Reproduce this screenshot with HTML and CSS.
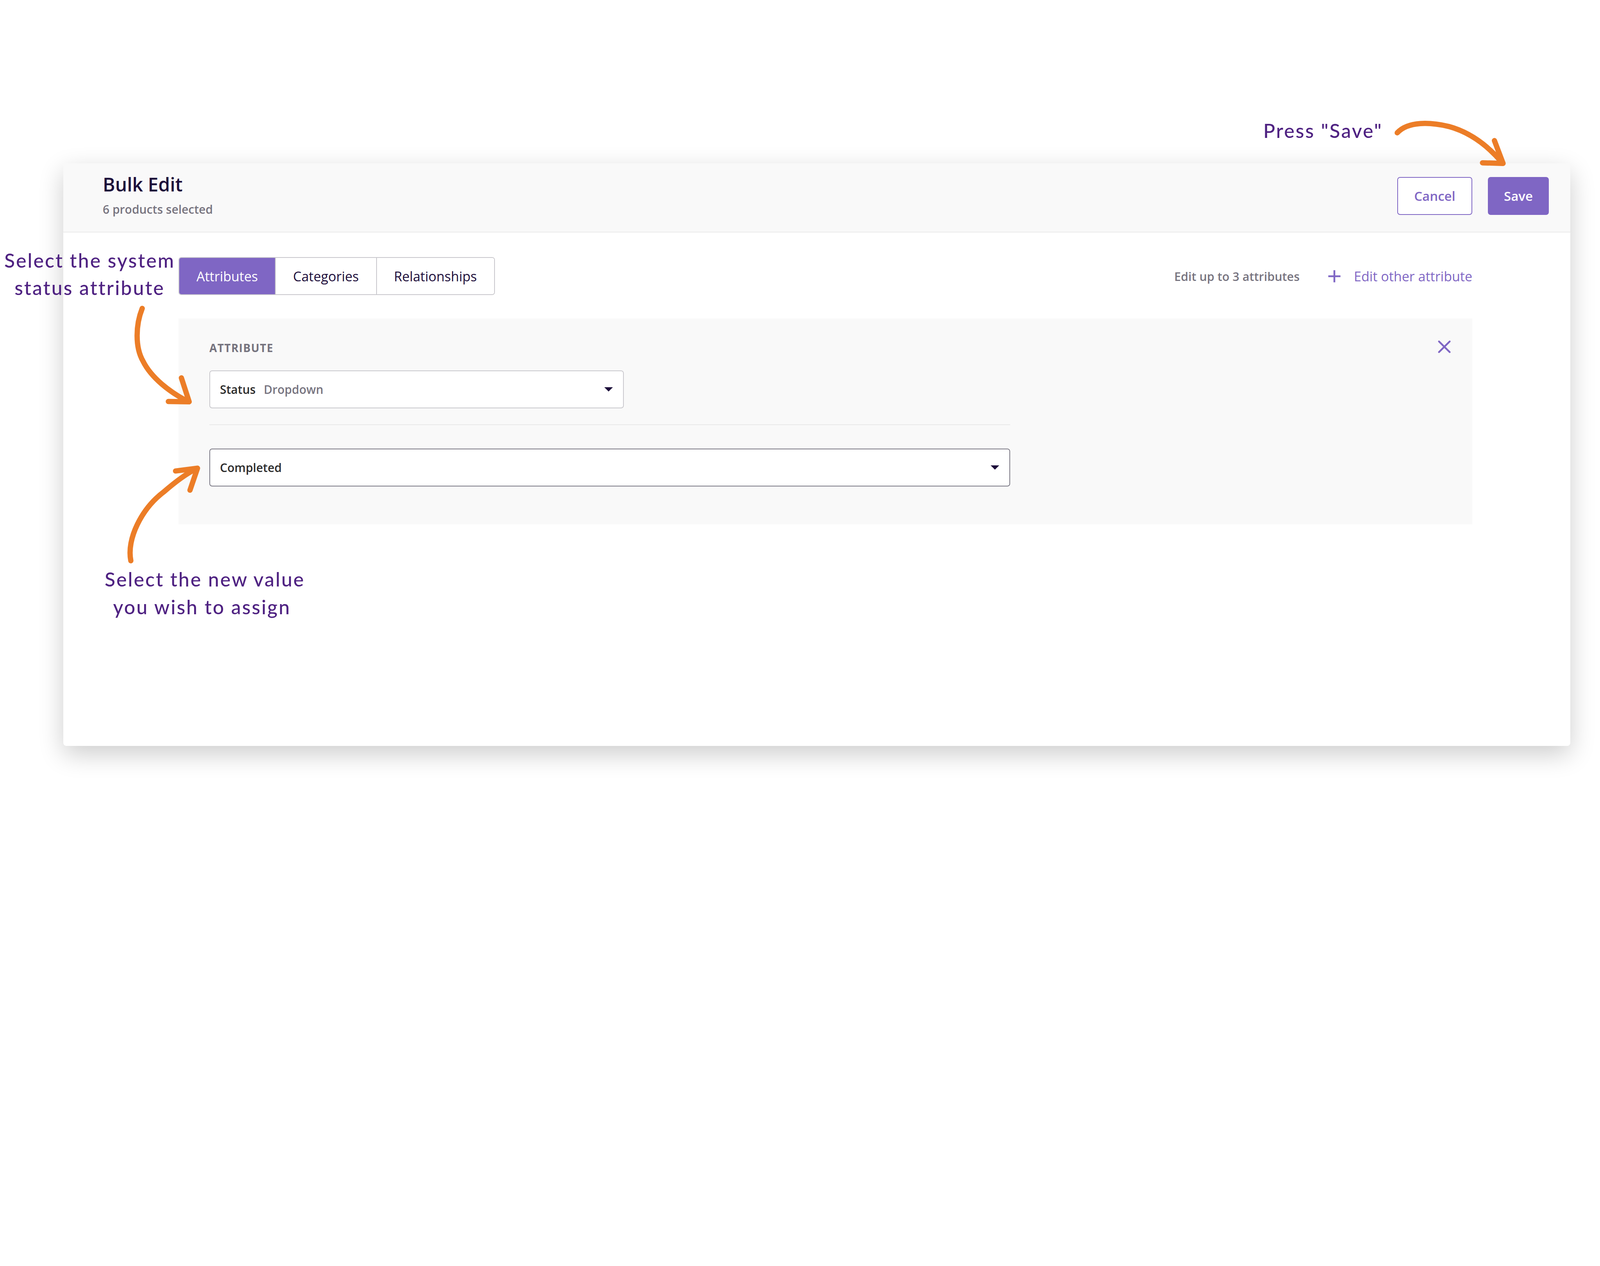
FILE: index.html
```html
<!DOCTYPE html>
<html>
<head>
    <title>Bulk Edit</title>
    <link rel="stylesheet" href="styles.css">
</head>
<body>
    <div class="stage">
        <div class="card">
            <header class="card-head">
                <div class="head-text">
                    <h1 class="title">Bulk Edit</h1>
                    <div class="subtitle">6 products selected</div>
                </div>
                <div class="head-actions">
                    <button type="button" class="btn btn-outline">Cancel</button>
                    <button type="button" class="btn btn-primary">Save</button>
                </div>
            </header>
            <div class="card-body">
                <div class="toolbar">
                    <div class="tabs">
                        <button type="button" class="tab active">Attributes</button>
                        <button type="button" class="tab">Categories</button>
                        <button type="button" class="tab">Relationships</button>
                    </div>
                    <div class="toolbar-right">
                        <span class="hint">Edit up to 3 attributes</span>
                        <a class="add-link">
                            <svg class="plus-icon" viewBox="0 0 48 48" width="34" height="34">
                                <path d="M24 2 V46 M2 24 H46" />
                            </svg>
                            Edit other attribute
                        </a>
                    </div>
                </div>
                <section class="attr-panel">
                    <div class="attr-fields">
                        <div class="field-label">ATTRIBUTE</div>
                        <div class="select select-attr">
                            <span><span class="select-name">Status</span><span class="select-type">Dropdown</span></span>
                            <span class="caret"></span>
                        </div>
                        <hr class="divider">
                        <div class="select select-value">
                            <span class="select-name">Completed</span>
                            <span class="caret"></span>
                        </div>
                    </div>
                    <button type="button" class="close-btn">
                        <svg viewBox="0 0 47 47" width="33" height="33">
                            <path d="M4 4 L43 43 M43 4 L4 43" />
                        </svg>
                    </button>
                </section>
            </div>
        </div>

        <!-- tutorial annotations -->
        <div class="note note-save">Press "Save"</div>
        <div class="note note-attr">Select the system<br>status attribute</div>
        <div class="note note-value">Select the new value<br>you wish to assign</div>

        <svg class="arrows" viewBox="0 0 5760 3240" width="4096" height="2304">
            <path d="M5030 478 C5070 435 5150 440 5215 455 C5300 478 5360 530 5405 582" />
            <path d="M5380 506 L5411 588 L5337 586" />
            <path d="M512 1110 C488 1170 486 1250 515 1300 C545 1360 610 1410 678 1446" />
            <path d="M653 1360 L681 1446 L606 1445" />
            <path d="M471 2018 C455 1940 510 1830 590 1770 C630 1735 668 1706 708 1686" />
            <path d="M632 1695 L711 1685 L684 1764" />
        </svg>
    </div>
</body>
</html>
```
FILE: styles.css
```css
body {
    margin: 0;
    font-family: "Open Sans", "Noto Sans", sans-serif;
    background-color: #fff;
}
.stage {
    position: relative;
    width: 4096px;
    height: 2304px;
    box-sizing: border-box;
    padding: 418px 0 0 162px;
    overflow: hidden;
    background-color: #fff;
}
.card {
    width: 3858px;
    height: 1491px;
    background-color: #fff;
    border-radius: 8px;
    box-shadow: 0 21px 64px rgba(0, 0, 0, 0.2);
    overflow: hidden;
}
.card-head {
    display: flex;
    justify-content: space-between;
    align-items: flex-start;
    box-sizing: border-box;
    height: 177px;
    padding: 24px 55px 0 101px;
    background-color: #f9f9f9;
    border-bottom: 2px solid #ebebeb;
}
.title {
    margin: 0;
    font-size: 48px;
    line-height: 60px;
    font-weight: 600;
    color: #1c0d3a;
}
.subtitle {
    margin-top: 15px;
    font-size: 30px;
    line-height: 37px;
    font-weight: 600;
    color: #77747f;
}
.head-actions {
    display: flex;
    gap: 40px;
    margin-top: 11px;
}
.btn {
    height: 97px;
    box-sizing: border-box;
    border-radius: 7px;
    font-family: inherit;
    font-size: 33px;
    font-weight: 600;
    cursor: pointer;
}
.btn-outline {
    width: 192px;
    background-color: #fff;
    color: #7f66c4;
    border: 2px solid #7f66c4;
}
.btn-primary {
    width: 156px;
    background-color: #7f66c4;
    color: #fff;
    border: none;
}
.card-body {
    padding: 63px 251px 0 295px;
}
.toolbar {
    display: flex;
    justify-content: space-between;
    align-items: center;
    margin-bottom: 60px;
}
.tabs {
    display: flex;
    height: 97px;
    box-sizing: border-box;
    border: 2px solid #c8c7cc;
    border-radius: 7px;
    overflow: hidden;
}
.tab {
    padding: 0 44px;
    background-color: #fff;
    border: none;
    border-left: 2px solid #c8c7cc;
    font-family: inherit;
    font-size: 34px;
    font-weight: 500;
    color: #1c0d3a;
}
.tab:first-child {
    border-left: none;
}
.tab.active {
    background-color: #7f66c4;
    color: #fff;
}
.toolbar-right {
    display: flex;
    align-items: center;
}
.hint {
    margin-right: 72px;
    font-size: 30.5px;
    font-weight: 600;
    color: #77747f;
}
.add-link {
    display: flex;
    align-items: center;
    gap: 33px;
    font-size: 34px;
    color: #7f66c4;
    cursor: pointer;
}
.plus-icon path {
    stroke: #7f66c4;
    stroke-width: 6.5;
    fill: none;
}
.attr-panel {
    display: flex;
    justify-content: space-between;
    align-items: flex-start;
    padding: 58px 55px 97px 79px;
    background-color: #f9f9f9;
}
.attr-fields {
    width: 2050px;
}
.field-label {
    font-size: 28px;
    line-height: 34px;
    font-weight: 700;
    letter-spacing: 1.4px;
    color: #75737e;
    margin-bottom: 41px;
}
.select {
    display: flex;
    justify-content: space-between;
    align-items: center;
    box-sizing: border-box;
    padding: 0 26px 0 25px;
    background-color: #fff;
    border-radius: 7px;
    font-size: 30px;
    font-weight: 600;
}
.select-attr {
    width: 1061px;
    height: 97px;
    border: 2px solid #c9c8cd;
}
.select-value {
    height: 97px;
    border: 2px solid #7b7985;
}
.select-name {
    color: #2b2b2b;
}
.select-type {
    margin-left: 21px;
    color: #77747f;
}
.caret {
    width: 0;
    height: 0;
    border-left: 11px solid transparent;
    border-right: 11px solid transparent;
    border-top: 11px solid #1c0d3a;
}
.divider {
    height: 2px;
    margin: 41px 0 60px;
    border: none;
    background-color: #e9e9e9;
}
.close-btn {
    padding: 0;
    margin-top: -2px;
    background: none;
    border: none;
    cursor: pointer;
}
.close-btn path {
    stroke: #7f66c4;
    stroke-width: 6.5;
    stroke-linecap: round;
    fill: none;
}
.note {
    position: absolute;
    font-family: Lato, "Open Sans", sans-serif;
    font-size: 50px;
    font-weight: 500;
    line-height: 71px;
    letter-spacing: 3px;
    color: #4f2282;
    text-align: center;
    white-space: nowrap;
}
.note-save {
    left: 3234px;
    top: 299px;
}
.note-attr {
    left: 0;
    width: 459px;
    top: 631px;
    line-height: 70px;
}
.note-value {
    left: 268px;
    width: 498px;
    top: 1447px;
}
.arrows {
    position: absolute;
    left: 0;
    top: 0;
    pointer-events: none;
}
.arrows path {
    fill: none;
    stroke: #ec7d27;
    stroke-width: 19;
    stroke-linecap: round;
    stroke-linejoin: round;
}
```
